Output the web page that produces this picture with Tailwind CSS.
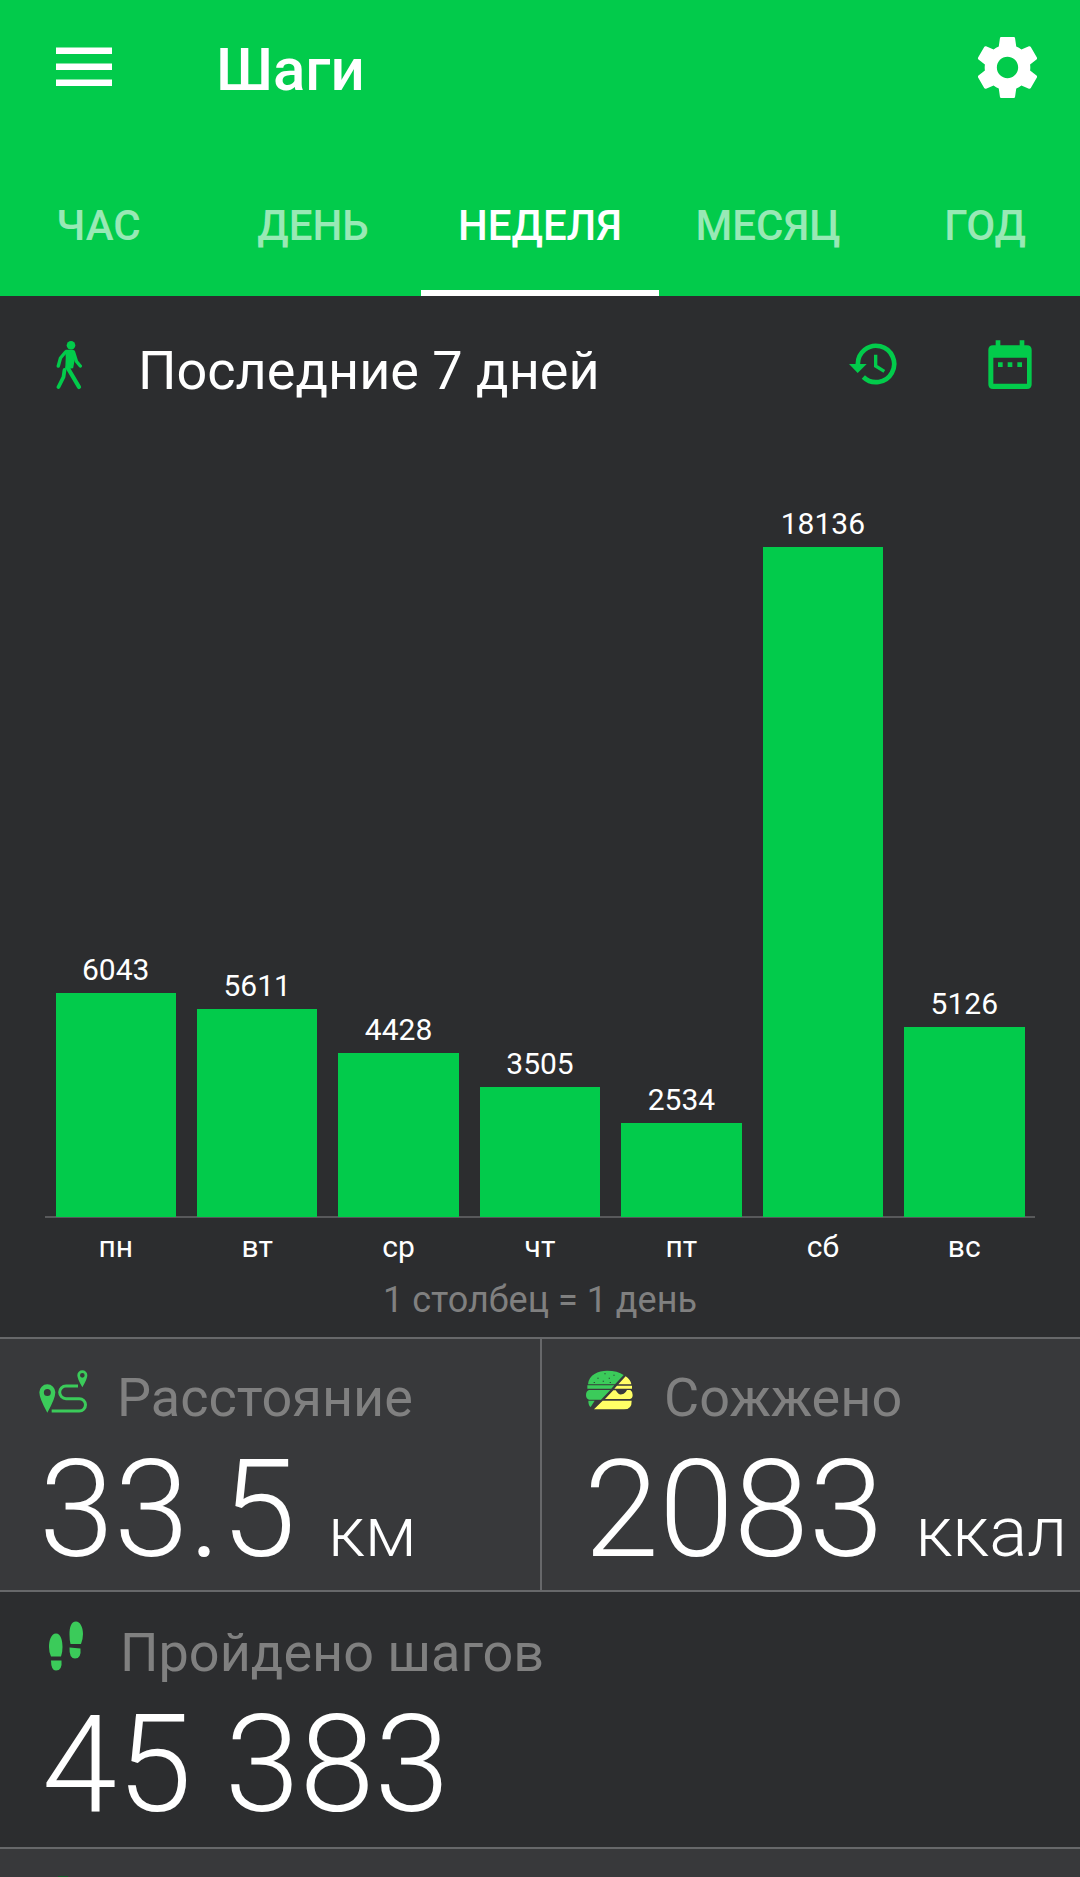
<!DOCTYPE html>
<html lang="ru">
<head>
    <meta charset="UTF-8">
    <meta name="viewport" content="width=device-width, initial-scale=1.0">
    <title>Шаги</title>
    <script src="https://cdn.jsdelivr.net/npm/@tailwindcss/browser@4"></script>
</head>
<body class="bg-[#2c2d2f] font-['Roboto',sans-serif] text-white overflow-hidden">
    <div class="w-[1080px] h-[1877px] flex flex-col overflow-hidden">

        <!-- Шапка -->
        <header class="h-[296px] shrink-0 bg-[#02cb4b] flex flex-col justify-between">
            <div class="flex items-start pl-14 pr-9">
                <svg class="w-14 h-10 mt-[47px]" viewBox="0 0 56 40" fill="#fff">
                    <path d="M0 .6h56v6.400H0zM0 16.600h56v6.400H0zM0 32.600h56v6.400H0z"/>
                </svg>
                <h1 class="ml-[104px] mt-10 text-[60px] leading-[60px] font-medium">Шаги</h1>
                <svg class="w-[73px] h-[73px] mt-[31px] ml-auto" viewBox="0 0 24 24" fill="#fff">
                    <path d="M19.430 12.980c.04-.32.07-.64.07-.98s-.03-.66-.07-.98l2.110-1.650c.19-.15.24-.42.12-.64l-2-3.460c-.12-.22-.39-.3-.61-.22l-2.490 1c-.52-.4-1.080-.73-1.690-.98l-.38-2.650C14.460 2.180 14.250 2 14 2h-4c-.25 0-.46.18-.49.42l-.38 2.650c-.61.25-1.170.59-1.690.98l-2.490-1c-.23-.09-.49 0-.61.22l-2 3.460c-.13.22-.07.49.12.64l2.110 1.650c-.04.32-.07.65-.07.98s.03.66.07.98l-2.110 1.650c-.19.15-.24.42-.12.64l2 3.460c.12.22.39.3.61.22l2.490-1c.52.4 1.080.73 1.690.98l.38 2.650c.03.24.24.42.49.42h4c.25 0 .46-.18.49-.42l.38-2.650c.61-.25 1.170-.59 1.690-.98l2.490 1c.23.09.49 0 .61-.22l2-3.460c.12-.22.07-.49-.12-.64l-2.110-1.650zM12 15.500c-1.930 0-3.500-1.570-3.500-3.500s1.570-3.500 3.500-3.500 3.500 1.570 3.500 3.500-1.570 3.500-3.500 3.500z"/>
                </svg>
            </div>
            <nav class="w-[1101px] -ml-2 h-[91px] grid grid-cols-[213px_216px_238px_218px_216px] text-center text-[42px] leading-[42px] font-medium text-white/60">
                <a>ЧАС</a>
                <a>ДЕНЬ</a>
                <a class="text-white border-b-6 border-white">НЕДЕЛЯ</a>
                <a>МЕСЯЦ</a>
                <a>ГОД</a>
            </nav>
        </header>

        <main class="h-[1041px] shrink-0 flex flex-col">
            <div class="h-[120px] pt-11 pl-14 pr-12 flex items-start">
                <svg class="w-[26px] h-[50px]" viewBox="0 0 26 50" fill="none" stroke="#02cb4b" stroke-linecap="round" stroke-linejoin="round">
                    <circle cx="15" cy="5.200" r="4.300" fill="#02cb4b" stroke="none"/>
                    <path d="M10 10.500h7l1.500 6-2 11-6.500 1 .5-11z" fill="#02cb4b" stroke-width="1.500"/>
                    <path d="M9.500 12 4.500 18 2.300 26M17.500 12l3 9.500 3.800 4.500" stroke-width="3.400"/>
                    <path d="M11.500 27.500 23 47" stroke-width="4.200"/>
                    <path d="M8.500 30 7.500 37 2.500 47" stroke-width="3.800"/>
                </svg>
                <h2 class="ml-14 mt-px text-[54px] leading-[60px]">Последние 7 дней</h2>
                <svg class="w-12 h-[44px] ml-auto mt-[2px]" viewBox="148 96 144 132" fill="none" stroke="#02cb4b">
                    <path d="M174.500 163A54.500 54.500 0 1 1 191 201" stroke-width="14"/>
                    <path d="M148 162h53l-27 27z" fill="#02cb4b" stroke="none"/>
                    <path d="M228 134v34l26 16" stroke-width="10"/>
                </svg>
                <svg class="w-11 h-[49px] ml-[91px]" viewBox="567 90 132 147" fill="#02cb4b">
                    <path fill-rule="evenodd" d="M590 91h14v15h58V91h14v15h8q14 0 14 14v103q0 14-14 14H582q-14 0-14-14V120q0-14 14-14h8zM583 143v78h101v-78z"/>
                    <path d="M597 157h14v14h-14zM626 157h14v14h-14zM655 157h14v14h-14z"/>
                </svg>
            </div>

            <!-- Диаграмма: высота столбца = шаги * 0.03694 px -->
            <div class="mx-[45px] h-[802px] grid grid-cols-7 items-end border-b-2 border-[#58595b] text-[30px] leading-[30px] text-center">
                <div class="px-[10.500px] -mb-px"><p class="mb-2">6043</p><div class="bg-[#02cb4b]" style="height:224px"></div></div>
                <div class="px-[10.500px] -mb-px"><p class="mb-2">5611</p><div class="bg-[#02cb4b]" style="height:208px"></div></div>
                <div class="px-[10.500px] -mb-px"><p class="mb-2">4428</p><div class="bg-[#02cb4b]" style="height:164px"></div></div>
                <div class="px-[10.500px] -mb-px"><p class="mb-2">3505</p><div class="bg-[#02cb4b]" style="height:130px"></div></div>
                <div class="px-[10.500px] -mb-px"><p class="mb-2">2534</p><div class="bg-[#02cb4b]" style="height:94px"></div></div>
                <div class="px-[10.500px] -mb-px"><p class="mb-2">18136</p><div class="bg-[#02cb4b]" style="height:670px"></div></div>
                <div class="px-[10.500px] -mb-px"><p class="mb-2">5126</p><div class="bg-[#02cb4b]" style="height:190px"></div></div>
            </div>
            <div class="mx-[45px] mt-[14px] grid grid-cols-7 text-[30px] leading-[30px] text-center">
                <span>пн</span>
                <span>вт</span>
                <span>ср</span>
                <span>чт</span>
                <span>пт</span>
                <span>сб</span>
                <span>вс</span>
            </div>
            <p class="mt-5 text-center text-[36px] leading-[36px] text-[#808080]">1 столбец = 1 день</p>
        </main>

        <!-- Показатели -->
        <section class="h-[255px] shrink-0 flex border-y-2 border-[#67686a] bg-[#38393b]">
            <div class="w-[540px] shrink-0 pt-7">
                <div class="flex items-start pl-[39px]">
                    <svg class="w-[49px] h-[43px] mt-[3px]" viewBox="56 59 147 129" fill="#3bcb5a">
                        <path fill-rule="evenodd" d="M81 187Q57 145 57 126a24 24 0 0 1 48 0q0 19-24 61zM81 116a10.500 10.500 0 1 0 0 21 10.500 10.500 0 0 0 0-21z"/>
                        <path fill-rule="evenodd" d="M186 111q-15-25-15-36a15 15 0 0 1 30 0q0 11-15 36zM186 68a7 7 0 1 0 0 14 7 7 0 0 0 0-14z"/>
                        <path d="M173 107H137a19 19 0 0 0 0 38h40a18 18 0 0 1 0 37H94" fill="none" stroke="#3bcb5a" stroke-width="9"/>
                    </svg>
                    <span class="ml-[29px] mt-px text-[54px] leading-[60px] text-[#808080]">Расстояние</span>
                </div>
                <p class="mt-3 ml-[39px] flex items-baseline font-light text-[135px] leading-[140px]">33.5<span class="ml-8 text-[71px]">км</span></p>
            </div>
            <div class="grow border-l-2 border-[#67686a] pt-7">
                <div class="flex items-start pl-11">
                    <svg class="w-[47px] h-[41px] mt-[3px]" viewBox="47 60 141 123">
                        <g fill="#3bcb5a">
                            <path d="M53 103C55 74 84 62 110 62q32 0 50 13l-26 28z"/>
                            <path d="M51 106h81l-9 10H51zM56 120h64l-28 29H56q-9-3-9-14 0-12 9-15zM54 152h19l-12 19q-7-4-7-19z"/>
                        </g>
                        <g fill="#ffff66">
                            <path d="M166 79q15 10 17 24h-39zM140 107h45v9h-53zM129 121l7 0q10 16 18 12 10-1 16-13h10q7 4 7 15 0 10-8 12h-75zM97 152h87q1 26-23 26H71z"/>
                        </g>
                        <path d="M81 83h4v3h-4zM102 70h4v3h-4zM129 74h4v3h-4zM115 83h4v3h-4zM97 92h4v3h-4zM70 96h4v3h-4zM118 96h4v3h-4z" fill="#2c5138"/>
                    </svg>
                    <span class="ml-[31px] mt-px text-[54px] leading-[60px] text-[#808080]">Сожжено</span>
                </div>
                <p class="mt-3 ml-[42px] flex items-baseline font-light text-[135px] leading-[140px]">2083<span class="ml-8 text-[71px]">ккал</span></p>
            </div>
        </section>

        <section class="h-[257px] shrink-0 border-b-2 border-[#67686a] pt-[30px]">
            <div class="flex items-start pl-[49px]">
                <svg class="w-[35px] h-[50px] -mt-px" viewBox="0 0 35 50" fill="#3bcb5a">
                    <path d="M7 12.500C2 12.500 0 20 0 26q0 6 2 9.500h10Q13.500 32 13.500 26C13.500 20 12 12.500 7 12.500zM2 39.500h10.500q1 10-5.500 10-5 0-5-10z"/>
                    <path d="M27 .5c-5 0-6.500 6-6.500 13q0 6 1 9.500h10.500q2-5 2-10C34 6 31 .5 27 .5zM20.500 26.500l11 1q1 10-5.500 10-6 0-5.500-11z"/>
                </svg>
                <span class="ml-9 mt-px text-[54px] leading-[60px] text-[#808080]">Пройдено шагов</span>
            </div>
            <p class="mt-3 ml-[42px] font-light text-[135px] leading-[140px]">45 383</p>
        </section>

        <section class="grow bg-[#38393b] flex items-end pl-[58px]">
            <div class="w-2.5 h-px bg-[#12592a]"></div>
        </section>
    </div>
</body>
</html>
